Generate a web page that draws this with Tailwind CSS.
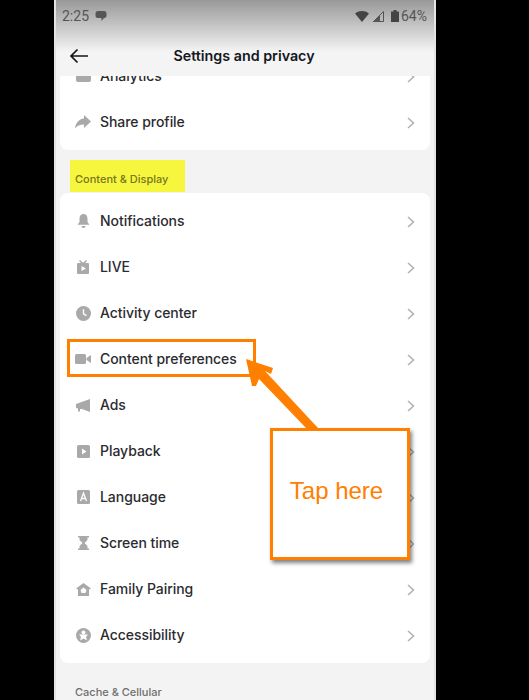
<!DOCTYPE html>
<html lang="en">
<head>
  <meta charset="UTF-8">
  <title>Settings and privacy</title>
  <script src="https://cdn.jsdelivr.net/npm/@tailwindcss/browser@4"></script>
</head>
<body class="bg-black">
  <div class="relative w-[529px] h-[700px] overflow-hidden bg-black font-['Inter',sans-serif]">
    <div class="ml-[54px] w-[382px] h-[700px] overflow-hidden bg-[#f3f3f3] border-x-2 border-[#e4e4e4]">
      <!-- Header -->
      <header class="relative z-10 h-[76px] bg-gradient-to-b from-[#999999] to-[#f4f4f4] to-[68%]">
        <div class="flex items-center justify-between h-[32px] pl-[6px] pr-[7px] text-[#555555]">
          <div class="flex items-center gap-[6px]">
            <span class="text-[14px] font-['Roboto',sans-serif]">2:25</span>
            <svg class="w-[12px] h-[12px]" viewBox="0 0 12 12" fill="#555"><path d="M3 1h6a2.500 2.500 0 0 1 2.500 2.500v2A2.500 2.500 0 0 1 9 8L6.500 11V8H3A2.500 2.500 0 0 1 .5 5.500v-2A2.500 2.500 0 0 1 3 1z"/></svg>
          </div>
          <div class="flex items-center">
            <svg class="w-[14px] h-[11px] mr-[4px]" viewBox="0 0 14 11" fill="#444"><path d="M0 2.500C4-.8 10-.8 14 2.500L7 11z"/></svg>
            <svg class="w-[11px] h-[11px] mr-[7px]" viewBox="0 0 11 11" fill="none" stroke="#555" stroke-width="1"><path d="M10.500.5v10H.5z"/><path d="M.5 10.500 6.500 4.500v6z" fill="#555"/></svg>
            <svg class="w-[8px] h-[12px] mr-[2px]" viewBox="0 0 8 12" fill="#444"><path d="M2.500 0h3v1.500H8V12H0V1.500h2.500z"/></svg>
            <span class="text-[14px] font-['Roboto',sans-serif]">64%</span>
          </div>
        </div>
        <div class="relative flex items-center justify-center h-[44px] pr-[2px]">
          <svg class="absolute left-[13px] top-[16px] w-[20px] h-[16px]" viewBox="0 0 20 16" fill="none" stroke="#161616" stroke-width="1.700"><path d="M19 8H2M8.500 1.500 2 8l6.500 6.500"/></svg>
          <h1 class="mt-[4px] text-[14.3px] font-semibold text-[#161823]">Settings and privacy</h1>
        </div>
      </header>

      <!-- Scrolled list -->
      <div class="relative -mt-[23px] px-[4px]">
        <section class="bg-white rounded-b-lg pb-[5px]">
          <div class="flex items-center h-[46px] pl-[14px] pr-[15px] gap-[8px]">
            <div class="w-[18px] flex justify-center"><div class="w-[15px] h-[12px] bg-[#a9a9a9] rounded-[2px]"></div></div>
            <span class="flex-1 mb-[1px] text-[14px] tracking-[-0.05px] font-medium text-[#2b2b30]">Analytics</span>
            <svg class="w-[8px] h-[12px] mt-[2px]" viewBox="0 0 8 12" fill="none" stroke="#b0b0b0" stroke-width="1.500"><path d="M1 1l5.500 5L1 11"/></svg>
          </div>
          <div class="flex items-center h-[46px] pl-[14px] pr-[15px] gap-[8px]">
            <div class="w-[18px] flex justify-center">
              <svg class="w-[16px] h-[14px]" viewBox="0 0 16 14" fill="#a9a9a9"><path d="M9 0l7 6.500L9 13V9.500C5 9.500 2.500 10.500 0 13.500 .5 8 4 4 9 3.500z"/></svg>
            </div>
            <span class="flex-1 mb-[1px] text-[14px] tracking-[-0.05px] font-medium text-[#2b2b30]">Share profile</span>
            <svg class="w-[8px] h-[12px] mt-[2px]" viewBox="0 0 8 12" fill="none" stroke="#b0b0b0" stroke-width="1.500"><path d="M1 1l5.500 5L1 11"/></svg>
          </div>
        </section>

        <h2 class="h-[43px] pt-[22px] pl-[15px] text-[11px] leading-[14px] font-medium text-[#6f6f6f]">Content &amp; Display</h2>

        <section class="bg-white rounded-lg py-[5px]">
          <div class="flex items-center h-[46px] pl-[14px] pr-[15px] gap-[8px]">
            <div class="w-[18px] flex justify-center">
              <svg class="w-[13px] h-[14px]" viewBox="0 0 13 14" fill="#a9a9a9"><path d="M6.500 0C9 0 10.500 2 10.500 4.500V8l2 2.800H.5L2.500 8V4.500C2.500 2 4 0 6.500 0zM4.500 12h4a2 2 0 0 1-4 0z"/></svg>
            </div>
            <span class="flex-1 mb-[1px] text-[14px] tracking-[-0.05px] font-medium text-[#2b2b30]">Notifications</span>
            <svg class="w-[8px] h-[12px] mt-[2px]" viewBox="0 0 8 12" fill="none" stroke="#b0b0b0" stroke-width="1.500"><path d="M1 1l5.500 5L1 11"/></svg>
          </div>
          <div class="flex items-center h-[46px] pl-[14px] pr-[15px] gap-[8px]">
            <div class="w-[18px] flex justify-center">
              <svg class="w-[12px] h-[14px]" viewBox="0 0 12 14" fill="#a9a9a9"><path fill-rule="evenodd" d="M3 0l3 2.800L9 0l1 1-2 2h3a1 1 0 0 1 1 1v9a1 1 0 0 1-1 1H1a1 1 0 0 1-1-1V4a1 1 0 0 1 1-1h3L2 1zM4.500 6v5L9 8.500z"/></svg>
            </div>
            <span class="flex-1 mb-[1px] text-[14px] tracking-[-0.05px] font-medium text-[#2b2b30]">LIVE</span>
            <svg class="w-[8px] h-[12px] mt-[2px]" viewBox="0 0 8 12" fill="none" stroke="#b0b0b0" stroke-width="1.500"><path d="M1 1l5.500 5L1 11"/></svg>
          </div>
          <div class="flex items-center h-[46px] pl-[14px] pr-[15px] gap-[8px]">
            <div class="w-[18px] flex justify-center">
              <svg class="w-[15px] h-[15px]" viewBox="0 0 14 14"><circle cx="7" cy="7" r="7" fill="#a9a9a9"/><path d="M7 3v4.300l2.800 1.700" fill="none" stroke="#fff" stroke-width="1.300"/></svg>
            </div>
            <span class="flex-1 mb-[1px] text-[14px] tracking-[-0.05px] font-medium text-[#2b2b30]">Activity center</span>
            <svg class="w-[8px] h-[12px] mt-[2px]" viewBox="0 0 8 12" fill="none" stroke="#b0b0b0" stroke-width="1.500"><path d="M1 1l5.500 5L1 11"/></svg>
          </div>
          <div class="flex items-center h-[46px] pl-[14px] pr-[15px] gap-[8px]">
            <div class="w-[18px] flex justify-center">
              <svg class="w-[16px] h-[10px]" viewBox="0 0 16 10" fill="#a9a9a9"><rect width="11" height="10" rx="1.500"/><path d="M11.500 4 16 1v8l-4.500-3z"/></svg>
            </div>
            <span class="flex-1 mb-[1px] text-[14px] tracking-[-0.05px] font-medium text-[#2b2b30]">Content preferences</span>
            <svg class="w-[8px] h-[12px] mt-[2px]" viewBox="0 0 8 12" fill="none" stroke="#b0b0b0" stroke-width="1.500"><path d="M1 1l5.500 5L1 11"/></svg>
          </div>
          <div class="flex items-center h-[46px] pl-[14px] pr-[15px] gap-[8px]">
            <div class="w-[18px] flex justify-center">
              <svg class="w-[14px] h-[13px]" viewBox="0 0 14 13" fill="#a9a9a9"><path d="M14 0v13L6 10H4v2.500H2V9.500L0 9V5l14-5z"/></svg>
            </div>
            <span class="flex-1 mb-[1px] text-[14px] tracking-[-0.05px] font-medium text-[#2b2b30]">Ads</span>
            <svg class="w-[8px] h-[12px] mt-[2px]" viewBox="0 0 8 12" fill="none" stroke="#b0b0b0" stroke-width="1.500"><path d="M1 1l5.500 5L1 11"/></svg>
          </div>
          <div class="flex items-center h-[46px] pl-[14px] pr-[15px] gap-[8px]">
            <div class="w-[18px] flex justify-center">
              <svg class="w-[13px] h-[13px]" viewBox="0 0 13 13"><rect width="13" height="13" rx="1.500" fill="#a9a9a9"/><path d="M5 3.500v6l4.500-3z" fill="#fff"/></svg>
            </div>
            <span class="flex-1 mb-[1px] text-[14px] tracking-[-0.05px] font-medium text-[#2b2b30]">Playback</span>
            <svg class="w-[8px] h-[12px] mt-[2px]" viewBox="0 0 8 12" fill="none" stroke="#b0b0b0" stroke-width="1.500"><path d="M1 1l5.500 5L1 11"/></svg>
          </div>
          <div class="flex items-center h-[46px] pl-[14px] pr-[15px] gap-[8px]">
            <div class="w-[18px] flex justify-center">
              <svg class="w-[13px] h-[14px]" viewBox="0 0 13 14"><rect width="13" height="14" rx="1.500" fill="#a9a9a9"/><path d="M3.500 11 6.500 3l3 8M4.500 8.500h4" fill="none" stroke="#fff" stroke-width="1.300"/></svg>
            </div>
            <span class="flex-1 mb-[1px] text-[14px] tracking-[-0.05px] font-medium text-[#2b2b30]">Language</span>
            <svg class="w-[8px] h-[12px] mt-[2px]" viewBox="0 0 8 12" fill="none" stroke="#b0b0b0" stroke-width="1.500"><path d="M1 1l5.500 5L1 11"/></svg>
          </div>
          <div class="flex items-center h-[46px] pl-[14px] pr-[15px] gap-[8px]">
            <div class="w-[18px] flex justify-center">
              <svg class="w-[11px] h-[14px]" viewBox="0 0 11 14" fill="#a9a9a9"><path d="M0 0h11v1.500H9.500V4L6.500 7l3 3v2.500H11V14H0v-1.500h1.500V10l3-3-3-3V1.500H0z"/></svg>
            </div>
            <span class="flex-1 mb-[1px] text-[14px] tracking-[-0.05px] font-medium text-[#2b2b30]">Screen time</span>
            <svg class="w-[8px] h-[12px] mt-[2px]" viewBox="0 0 8 12" fill="none" stroke="#b0b0b0" stroke-width="1.500"><path d="M1 1l5.500 5L1 11"/></svg>
          </div>
          <div class="flex items-center h-[46px] pl-[14px] pr-[15px] gap-[8px]">
            <div class="w-[18px] flex justify-center">
              <svg class="w-[15px] h-[13px]" viewBox="0 0 15 13"><path d="M7.500 0 15 5.500l-2 1V13H2V6.500L0 5.500z" fill="#a9a9a9"/><path d="M7.500 4.500 10.500 7 9.500 10h-4l-1-3z" fill="#fff"/></svg>
            </div>
            <span class="flex-1 mb-[1px] text-[14px] tracking-[-0.05px] font-medium text-[#2b2b30]">Family Pairing</span>
            <svg class="w-[8px] h-[12px] mt-[2px]" viewBox="0 0 8 12" fill="none" stroke="#b0b0b0" stroke-width="1.500"><path d="M1 1l5.500 5L1 11"/></svg>
          </div>
          <div class="flex items-center h-[46px] pl-[14px] pr-[15px] gap-[8px]">
            <div class="w-[18px] flex justify-center">
              <svg class="w-[15px] h-[15px]" viewBox="0 0 15 15"><circle cx="7.500" cy="7.500" r="7.500" fill="#a9a9a9"/><circle cx="7.500" cy="4.500" r="2" fill="#fff"/><path d="M3 6.500h9l-2 2.500 1 3.500-3.500-2-3.500 2 1-3.500z" fill="#fff"/></svg>
            </div>
            <span class="flex-1 mb-[1px] text-[14px] tracking-[-0.05px] font-medium text-[#2b2b30]">Accessibility</span>
            <svg class="w-[8px] h-[12px] mt-[2px]" viewBox="0 0 8 12" fill="none" stroke="#b0b0b0" stroke-width="1.500"><path d="M1 1l5.500 5L1 11"/></svg>
          </div>
        </section>

        <h2 class="pt-[22px] pl-[15px] text-[11px] leading-[14px] font-medium text-[#6f6f6f]">Cache &amp; Cellular</h2>
      </div>
    </div>

    <!-- Annotations drawn over the screenshot -->
    <div class="absolute left-[70px] top-[160px] w-[115px] h-[32px] bg-[#f6f63f] pl-[5px] pt-[12px] text-[11px] leading-[14px] font-medium text-[#77771c]">Content &amp; Display</div>
    <div class="absolute left-[67px] top-[339px] w-[189px] h-[38px] border-[3px] border-[#ff8000]"></div>
    <svg class="absolute left-[240px] top-[350px] w-[90px] h-[85px]" viewBox="0 0 90 85" fill="#ff8000"><path d="M6 9 33 18 31 24 25 21 78 78 66 78 19 29 16 36 12 36z"/></svg>
    <div class="absolute left-[270px] top-[428px] w-[140px] h-[132px] bg-white border-[3px] border-[#ff8000] shadow-[2px_3px_4px_rgba(0,0,0,0.5)] flex items-center justify-center pr-[7px] pb-[6px] text-[24px] text-[#ff8000] font-['Liberation_Sans',sans-serif]">Tap here</div>
  </div>
</body>
</html>
